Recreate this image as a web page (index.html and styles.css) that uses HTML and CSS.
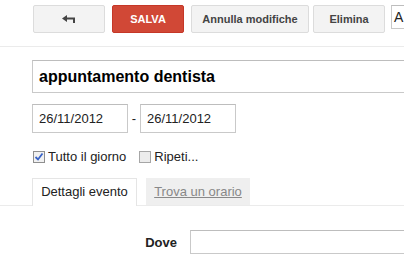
FILE: index.html
```html
<!DOCTYPE html>
<html lang="it">
<head>
  <meta charset="UTF-8">
  <title>Modifica evento</title>
  <link rel="stylesheet" href="styles.css">
</head>
<body>
  <div class="toolbar">
    <div class="btn btn-back">
      <svg width="14" height="8" viewBox="0 0 14 8">
        <path d="M0 3.5 L5 0 L5 2.5 L13 2.5 L13 8 L11 8 L11 4.5 L5 4.5 L5 7 Z" fill="#444"/>
      </svg>
    </div>
    <div class="btn btn-save">SALVA</div>
    <div class="btn btn-discard">Annulla modifiche</div>
    <div class="btn btn-delete">Elimina</div>
    <div class="field field-more">A</div>
  </div>

  <div class="editor">
    <div class="field field-title">appuntamento dentista</div>

    <div class="dates">
      <div class="field field-date">26/11/2012</div>
      <span class="dash">-</span>
      <div class="field field-date">26/11/2012</div>
    </div>

    <div class="options">
      <label class="check">
        <svg class="box" width="12" height="12" viewBox="0 0 12 12">
          <rect x="0.5" y="0.5" width="11" height="11" fill="#f1f1f1" stroke="#8f8f8f"/>
          <path d="M2.5 6 L5 8.5 L9.5 2.5" fill="none" stroke="#3a64c8" stroke-width="1.8"/>
        </svg>
        Tutto il giorno
      </label>
      <label class="check">
        <svg class="box" width="12" height="12" viewBox="0 0 12 12">
          <rect x="0.5" y="0.5" width="11" height="11" fill="#ececec" stroke="#a6a6a6"/>
        </svg>
        Ripeti...
      </label>
    </div>
  </div>

  <div class="tabs">
    <div class="tab tab-active">Dettagli evento</div>
    <div class="tab tab-other"><a href="#">Trova un orario</a></div>
  </div>

  <div class="details">
    <div class="row">
      <span class="row-label">Dove</span>
      <div class="field field-where"></div>
    </div>
  </div>
</body>
</html>
```

FILE: styles.css
```css
body {
  margin: 0;
  background: #fff;
  font-family: "Liberation Sans", Arial, sans-serif;
  color: #222;
  overflow: hidden;
}

.toolbar {
  display: flex;
  align-items: flex-start;
  height: 47px;
  padding-left: 33px;
  padding-top: 5px;
  box-sizing: border-box;
  border-bottom: 1px solid #ebebeb;
  white-space: nowrap;
}

.btn {
  height: 28px;
  box-sizing: border-box;
  display: flex;
  align-items: center;
  justify-content: center;
  font-size: 11px;
  font-weight: bold;
  border-radius: 2px;
  border: 1px solid #dcdcdc;
  background: #f3f3f3;
  color: #444;
  flex-shrink: 0;
}

.btn-back {
  width: 72px;
  margin-right: 7px;
}

.btn-save {
  width: 72px;
  margin-right: 7px;
  background: #d14836;
  border-color: #c53727;
  color: #fff;
}

.btn-discard {
  width: 118px;
  margin-right: 4px;
}

.btn-delete {
  width: 72px;
  margin-right: 6px;
}

.field {
  border: 1px solid #c9c9c9;
  border-top-color: #bdbdbd;
  box-sizing: border-box;
  background: #fff;
  flex-shrink: 0;
}

.field-more {
  height: 24px;
  width: 60px;
  font-size: 14px;
  line-height: 22px;
  padding-left: 2px;
  color: #222;
}

.editor {
  padding-left: 32px;
}

.field-title {
  margin-top: 13px;
  width: 420px;
  height: 33px;
  font-size: 16px;
  font-weight: bold;
  line-height: 31px;
  padding-left: 6px;
  color: #000;
}

.dates {
  display: flex;
  align-items: center;
  margin-top: 11px;
}

.field-date {
  width: 96px;
  height: 29px;
  font-size: 13px;
  line-height: 27px;
  padding-left: 6px;
  color: #222;
}

.dash {
  font-size: 13px;
  width: 12px;
  text-align: center;
}

.options {
  display: flex;
  margin-top: 16px;
  font-size: 13px;
  color: #222;
}

.check {
  display: flex;
  align-items: center;
  margin-right: 12px;
}

.check .box {
  margin: 0 3px 0 1px;
}

.tabs {
  display: flex;
  align-items: flex-end;
  margin-top: 14px;
  padding-left: 32px;
  height: 27px;
  border-bottom: 1px solid #ebebeb;
}

.tab {
  flex-shrink: 0;
  height: 27px;
  box-sizing: border-box;
  font-size: 13px;
  line-height: 26px;
  text-align: center;
  white-space: nowrap;
}

.tab-active {
  width: 105px;
  border: 1px solid #e5e5e5;
  border-bottom: none;
  background: #fff;
  margin-bottom: -1px;
  height: 28px;
  color: #222;
}

.tab-other {
  width: 104px;
  margin-left: 9px;
  background: #efefef;
  padding-top: 1px;
}

.tab-other a {
  color: #888;
  text-decoration: underline;
}

.details {
  padding-top: 24px;
}

.row {
  display: flex;
  align-items: center;
}

.row-label {
  flex-shrink: 0;
  width: 177px;
  text-align: right;
  font-size: 13px;
  font-weight: bold;
  color: #222;
  margin-right: 13px;
}

.field-where {
  width: 260px;
  height: 24px;
}
```
